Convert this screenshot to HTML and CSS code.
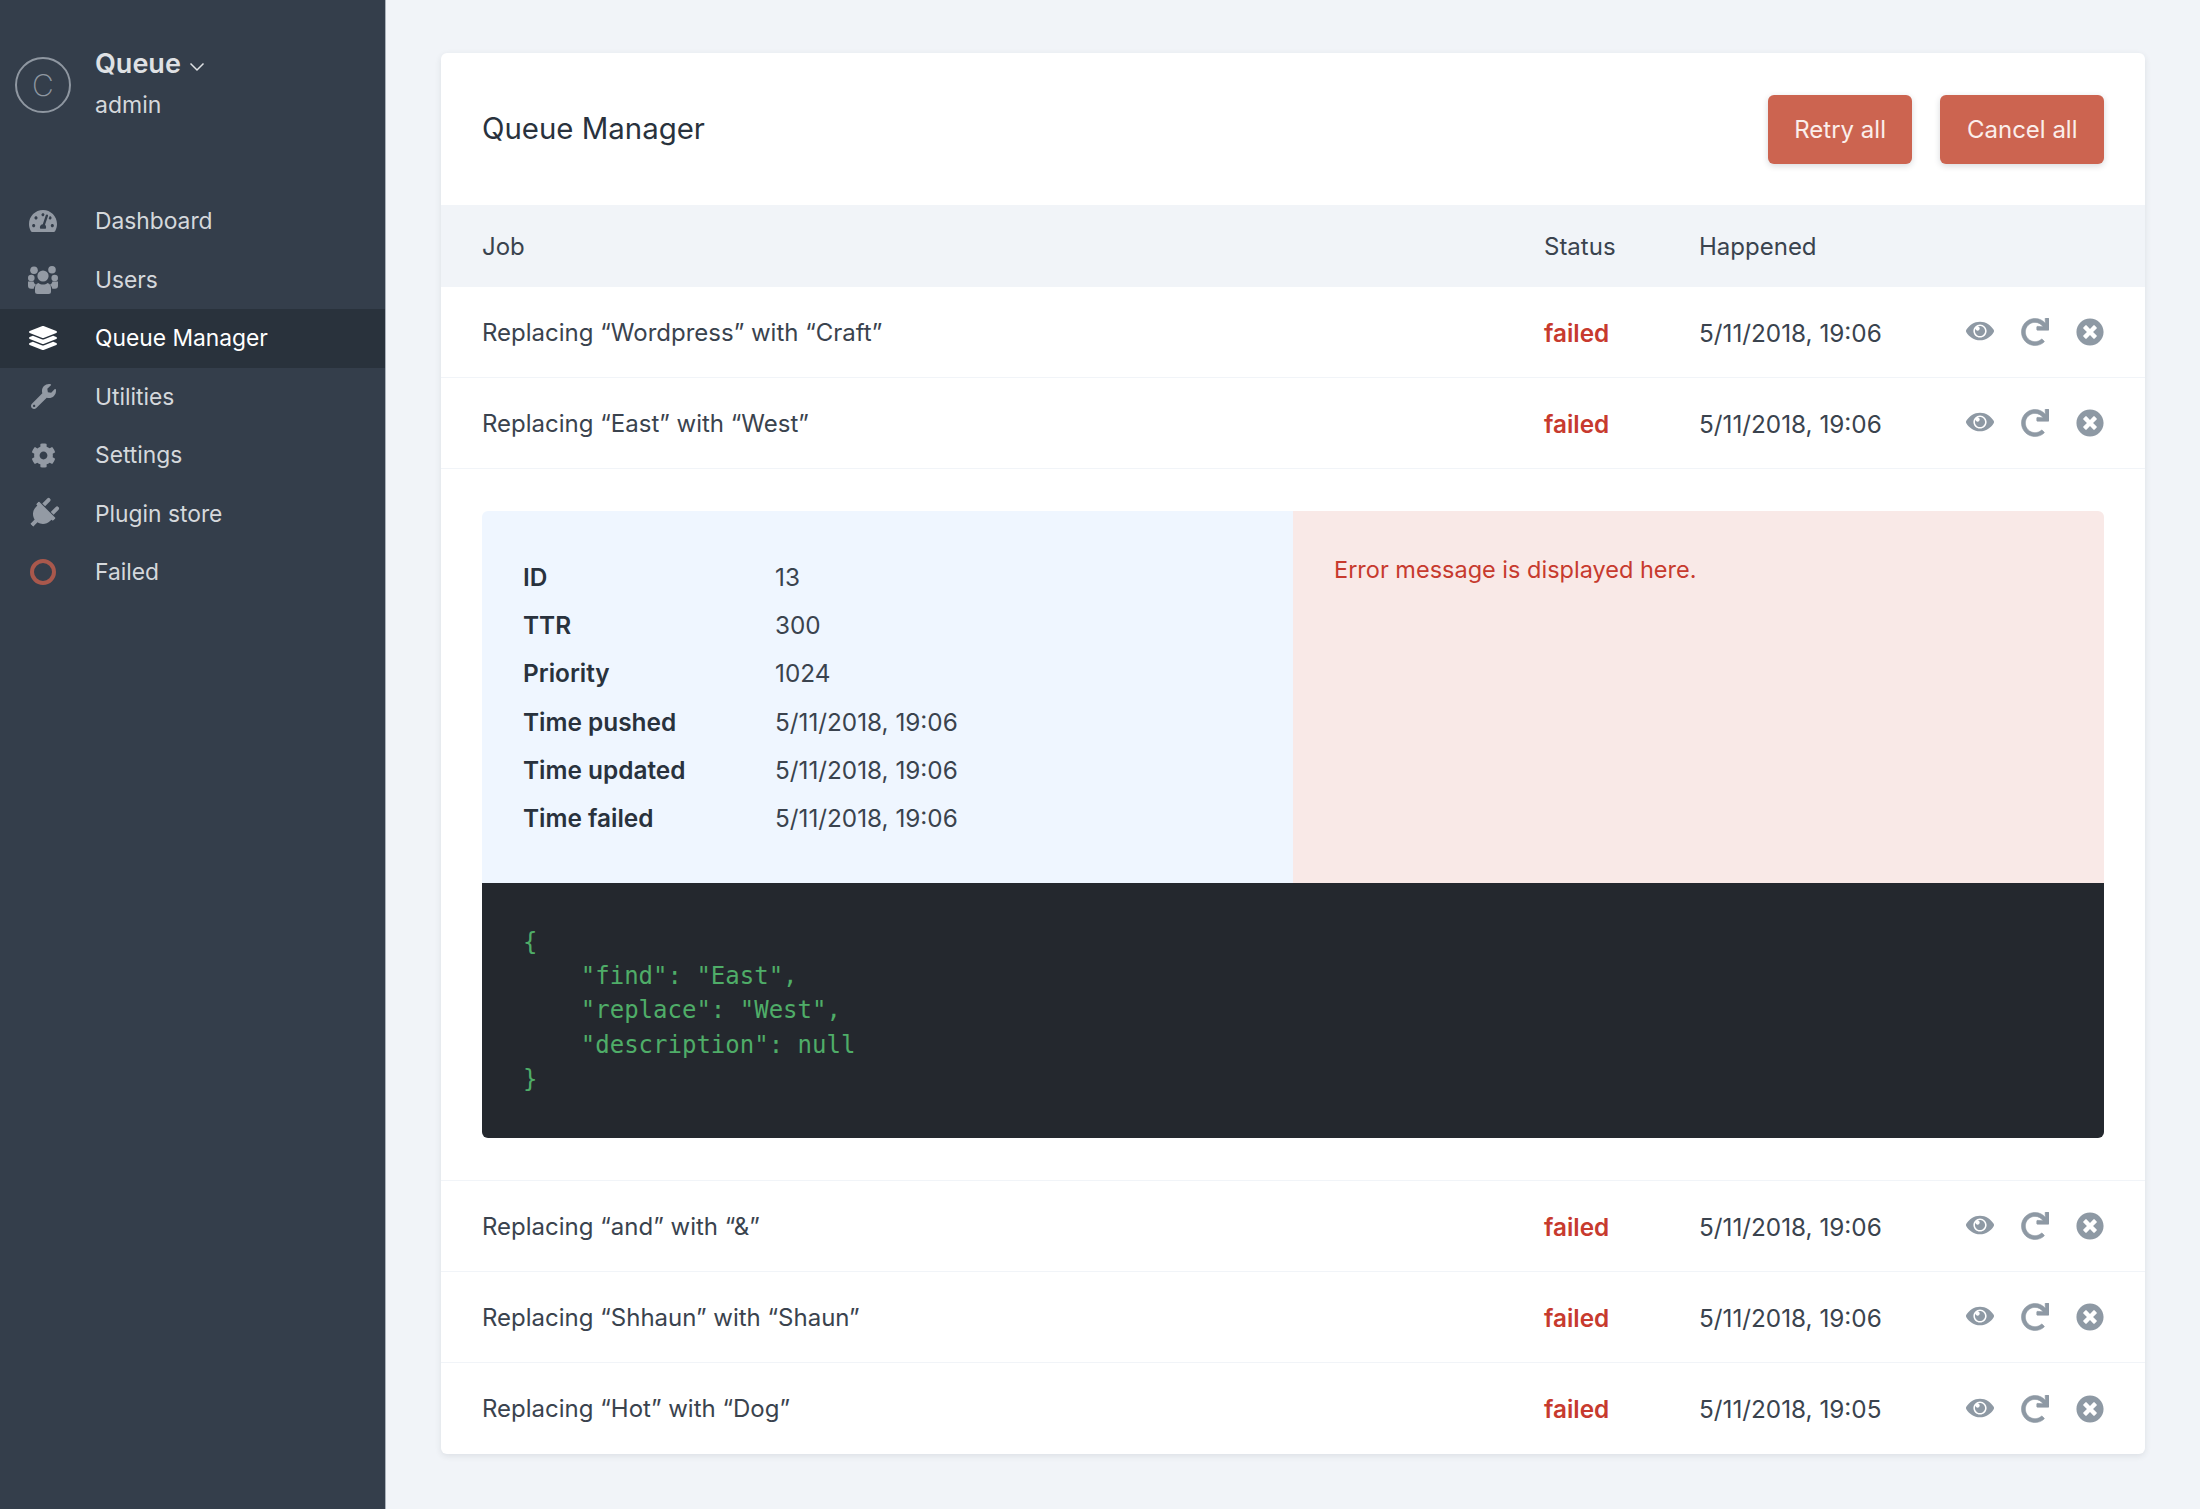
FILE: index.html
```html
<!DOCTYPE html>
<html lang="en">
<head>
<meta charset="utf-8">
<title>Queue Manager</title>
<link rel="stylesheet" href="styles.css">
</head>
<body>
<svg class="defs" width="0" height="0" aria-hidden="true">
  <symbol id="i-eye" viewBox="0 0 576 512"><path d="M569.354 231.631C512.969 135.949 407.81 64 288 64 168.14 64 63.004 135.994 6.646 231.631a47.999 47.999 0 0 0 0 48.739C63.031 376.051 168.19 448 288 448c119.86 0 224.996-71.994 281.354-167.631a47.997 47.997 0 0 0 0-48.738zM288 392c-75.162 0-136-60.827-136-136 0-75.162 60.826-136 136-136 75.162 0 136 60.826 136 136 0 75.162-60.826 136-136 136zm104-136c0 57.438-46.562 104-104 104s-104-46.562-104-104c0-17.708 4.431-34.379 12.236-48.973l-.001.032c0 23.651 19.173 42.823 42.824 42.823s42.824-19.173 42.824-42.823c0-23.651-19.173-42.824-42.824-42.824l-.032.001C253.621 156.431 270.292 152 288 152c57.438 0 104 46.562 104 104z"/></symbol>
  <symbol id="i-redo" viewBox="0 0 512 512"><path d="M500.333 0h-47.411c-6.853 0-12.314 5.729-11.986 12.574l3.966 82.759C399.416 41.899 331.672 8 256.001 8 119.34 8 7.899 119.526 8 256.187 8.101 393.068 119.096 504 256 504c63.926 0 122.202-24.187 166.178-63.908 5.113-4.618 5.354-12.561.482-17.433l-33.971-33.971c-4.466-4.466-11.64-4.717-16.38-.543C341.308 415.448 300.606 432 256 432c-97.267 0-176-78.716-176-176 0-97.267 78.716-176 176-176 60.892 0 114.506 30.858 146.099 77.8l-101.525-4.865c-6.845-.328-12.574 5.133-12.574 11.986v47.411c0 6.627 5.373 12 12 12h200.333c6.627 0 12-5.373 12-12V12c0-6.627-5.373-12-12-12z"/></symbol>
  <symbol id="i-times" viewBox="0 0 512 512"><path d="M256 8C119 8 8 119 8 256s111 248 248 248 248-111 248-248S393 8 256 8zm121.6 313.1c4.7 4.7 4.7 12.3 0 17L338 377.6c-4.7 4.7-12.3 4.7-17 0L256 312l-65.1 65.6c-4.7 4.7-12.3 4.7-17 0L134.4 338c-4.7-4.7-4.7-12.3 0-17l65.6-65-65.6-65.1c-4.7-4.7-4.7-12.3 0-17l39.6-39.6c4.7-4.7 12.3-4.7 17 0l65 65.7 65.1-65.6c4.7-4.7 12.3-4.7 17 0l39.6 39.6c4.7 4.7 4.7 12.3 0 17L312 256l65.6 65.1z"/></symbol>
</svg>
<div class="app">
  <aside class="sidebar">
    <header class="brand">
      <div class="logo">C</div>
      <div class="brand-text">
        <div class="brand-name">Queue
          <svg class="chev" viewBox="0 0 16 10"><path d="M1.5 1.5 8 8l6.5-6.5" fill="none" stroke="currentColor" stroke-width="1.5"/></svg>
        </div>
        <div class="brand-user">admin</div>
      </div>
    </header>
    <nav class="nav">
      <a class="nav-item"><span class="nav-icon"><svg viewBox="0 0 576 512"><path d="M288 32C128.94 32 0 160.94 0 320c0 52.8 14.25 102.26 39.06 144.8 5.61 9.62 16.3 15.2 27.44 15.2h443c11.14 0 21.83-5.58 27.44-15.2C561.75 422.26 576 372.8 576 320c0-159.06-128.94-288-288-288zm0 64c14.71 0 26.58 10.13 30.32 23.65-1.11 2.26-2.64 4.23-3.45 6.67l-9.22 27.67c-5.13 3.49-10.97 6.01-17.64 6.01-17.67 0-32-14.33-32-32S270.33 96 288 96zM96 384c-17.67 0-32-14.33-32-32s14.33-32 32-32 32 14.33 32 32-14.33 32-32 32zm48-160c-17.67 0-32-14.33-32-32s14.33-32 32-32 32 14.33 32 32-14.33 32-32 32zm246.77-72.41l-61.33 184C343.13 347.33 352 364.54 352 384c0 11.72-3.38 22.55-8.88 32H232.88c-5.5-9.45-8.88-20.28-8.88-32 0-33.94 26.5-61.43 59.9-63.59l61.34-184.01c4.17-12.56 17.73-19.45 30.36-15.17 12.57 4.19 19.35 17.79 15.17 30.36zm14.66 57.2l15.52-46.55c3.47-1.29 7.13-2.23 11.05-2.23 17.67 0 32 14.33 32 32s-14.33 32-32 32c-11.38-.01-20.89-6.27-26.57-15.22zM480 384c-17.67 0-32-14.33-32-32s14.33-32 32-32 32 14.33 32 32-14.33 32-32 32z"/></svg></span>Dashboard</a>
      <a class="nav-item"><span class="nav-icon"><svg class="users" viewBox="0 0 30 28"><circle cx="6" cy="4.3" r="3.8"/><circle cx="24" cy="3.8" r="3.8"/><circle cx="3.3" cy="12" r="3.3"/><circle cx="26.7" cy="12" r="3.3"/><circle cx="15" cy="10" r="5.6"/><path d="M0 15.5h5.5a5 5 0 0 0 2.5 3.2c-1.2 1-2 2.4-2.3 4H3a3 3 0 0 1-3-3zM30 15.5h-5.5a5 5 0 0 1-2.5 3.2c1.2 1 2 2.4 2.3 4H27a3 3 0 0 0 3-3zM10.5 17c1.2 1 2.8 1.6 4.5 1.6s3.300-.6 4.500-1.600c2.500.6 3.500 2.800 3.500 5.500v3a2.500 2.500 0 0 1-2.500 2.500H9.500A2.500 2.500 0 0 1 7 25.500v-3c0-2.700 1-4.900 3.500-5.500z"/></svg></span>Users</a>
      <a class="nav-item is-active"><span class="nav-icon"><svg class="layers" viewBox="0 0 512 512" preserveAspectRatio="none"><path d="M12.41 148.02l232.94 105.67c6.8 3.09 14.49 3.09 21.29 0l232.94-105.67c16.55-7.51 16.55-32.52 0-40.03L266.65 2.31a25.607 25.607 0 0 0-21.29 0L12.41 107.98c-16.55 7.51-16.55 32.53 0 40.04zm487.18 88.28l-58.09-26.33-161.64 73.27c-7.56 3.43-15.59 5.17-23.86 5.17s-16.29-1.74-23.86-5.17L70.51 209.97l-58.1 26.33c-16.55 7.5-16.55 32.5 0 40l232.94 105.59c6.8 3.08 14.49 3.08 21.29 0L499.59 276.3c16.55-7.5 16.55-32.5 0-40zm0 127.8l-57.87-26.23-161.86 73.37c-7.56 3.43-15.59 5.17-23.86 5.17s-16.29-1.74-23.86-5.17L70.29 337.87 12.41 364.1c-16.55 7.5-16.55 32.5 0 40l232.94 105.59c6.8 3.08 14.49 3.08 21.29 0L499.59 404.1c16.55-7.5 16.55-32.5 0-40z"/></svg></span>Queue Manager</a>
      <a class="nav-item"><span class="nav-icon"><svg class="small" viewBox="0 0 512 512"><path d="M507.73 109.1c-2.24-9.03-13.54-12.09-20.12-5.51l-74.36 74.36-67.88-11.31-11.31-67.88 74.36-74.36c6.62-6.62 3.43-17.9-5.66-20.16-47.38-11.74-99.55.91-136.58 37.93-39.64 39.64-50.55 97.1-34.05 147.2L18.74 402.76c-24.99 24.99-24.99 65.51 0 90.5 24.99 24.99 65.51 24.99 90.5 0l213.21-213.21c50.12 16.71 107.47 5.68 147.37-34.22 37.07-37.07 49.7-89.32 37.91-136.73zM64 472c-13.25 0-24-10.75-24-24 0-13.26 10.75-24 24-24s24 10.74 24 24c0 13.25-10.75 24-24 24z"/></svg></span>Utilities</a>
      <a class="nav-item"><span class="nav-icon"><svg class="small" viewBox="0 0 512 512"><path d="M487.4 315.7l-42.6-24.6c4.3-23.2 4.3-47 0-70.2l42.6-24.6c4.9-2.8 7.1-8.6 5.5-14-11.1-35.6-30-67.8-54.7-94.6-3.8-4.1-10-5.1-14.8-2.3L380.8 110c-17.9-15.4-38.5-27.3-60.8-35.1V25.8c0-5.6-3.9-10.5-9.4-11.7-36.7-8.2-74.3-7.8-109.2 0-5.5 1.2-9.4 6.1-9.4 11.7V75c-22.2 7.9-42.8 19.8-60.8 35.1L88.7 85.5c-4.9-2.8-11-1.9-14.8 2.3-24.7 26.7-43.6 58.9-54.7 94.6-1.7 5.4.6 11.2 5.5 14L67.3 221c-4.3 23.2-4.3 47 0 70.2l-42.6 24.6c-4.9 2.8-7.1 8.6-5.5 14 11.1 35.6 30 67.8 54.7 94.6 3.8 4.1 10 5.1 14.8 2.3l42.6-24.6c17.9 15.4 38.5 27.3 60.8 35.1v49.2c0 5.6 3.9 10.5 9.4 11.7 36.7 8.2 74.3 7.8 109.2 0 5.5-1.2 9.4-6.1 9.4-11.7v-49.2c22.2-7.9 42.8-19.8 60.8-35.1l42.6 24.6c4.9 2.8 11 1.9 14.8-2.3 24.7-26.7 43.6-58.9 54.7-94.6 1.5-5.5-.7-11.3-5.6-14.1zM256 336c-44.1 0-80-35.9-80-80s35.9-80 80-80 80 35.9 80 80-35.9 80-80 80z"/></svg></span>Settings</a>
      <a class="nav-item"><span class="nav-icon"><svg class="plug" viewBox="0 0 384 512"><path d="M256 144V32c0-17.673 14.327-32 32-32s32 14.327 32 32v112h-64zm112 16H16c-8.837 0-16 7.163-16 16v32c0 8.837 7.163 16 16 16h16v32c0 77.406 54.969 141.971 128 156.796V512h64v-99.204c73.031-14.825 128-79.39 128-156.796v-32h16c8.837 0 16-7.163 16-16v-32c0-8.837-7.163-16-16-16zM128 144V32c0-17.673-14.327-32-32-32S64 14.327 64 32v112h64z"/></svg></span>Plugin store</a>
      <a class="nav-item"><span class="nav-icon"><span class="ring"></span></span>Failed</a>
    </nav>
  </aside>

  <main class="main">
    <section class="card">
      <header class="card-head">
        <h1 class="title">Queue Manager</h1>
        <div class="actions-top">
          <button class="btn">Retry all</button>
          <button class="btn">Cancel all</button>
        </div>
      </header>

      <div class="row row-head">
        <div>Job</div><div>Status</div><div>Happened</div>
      </div>

      <div class="row">
        <div>Replacing “Wordpress” with “Craft”</div>
        <div class="failed">failed</div>
        <div class="date">5/11/2018, 19:06</div>
        <div class="row-icons">
          <svg class="ic ic-eye"><use href="#i-eye"/></svg><svg class="ic ic-redo"><use href="#i-redo"/></svg><svg class="ic"><use href="#i-times"/></svg>
        </div>
      </div>
      <div class="row">
        <div>Replacing “East” with “West”</div>
        <div class="failed">failed</div>
        <div class="date">5/11/2018, 19:06</div>
        <div class="row-icons">
          <svg class="ic ic-eye"><use href="#i-eye"/></svg><svg class="ic ic-redo"><use href="#i-redo"/></svg><svg class="ic"><use href="#i-times"/></svg>
        </div>
      </div>

      <div class="detail">
        <div class="detail-top">
          <dl class="info">
            <dt>ID</dt><dd>13</dd>
            <dt>TTR</dt><dd>300</dd>
            <dt>Priority</dt><dd>1024</dd>
            <dt>Time pushed</dt><dd>5/11/2018, 19:06</dd>
            <dt>Time updated</dt><dd>5/11/2018, 19:06</dd>
            <dt>Time failed</dt><dd>5/11/2018, 19:06</dd>
          </dl>
          <div class="error">Error message is displayed here.</div>
        </div>
        <pre class="code">{
    "find": "East",
    "replace": "West",
    "description": null
}</pre>
      </div>

      <div class="row">
        <div>Replacing “and” with “&amp;”</div>
        <div class="failed">failed</div>
        <div class="date">5/11/2018, 19:06</div>
        <div class="row-icons">
          <svg class="ic ic-eye"><use href="#i-eye"/></svg><svg class="ic ic-redo"><use href="#i-redo"/></svg><svg class="ic"><use href="#i-times"/></svg>
        </div>
      </div>
      <div class="row">
        <div>Replacing “Shhaun” with “Shaun”</div>
        <div class="failed">failed</div>
        <div class="date">5/11/2018, 19:06</div>
        <div class="row-icons">
          <svg class="ic ic-eye"><use href="#i-eye"/></svg><svg class="ic ic-redo"><use href="#i-redo"/></svg><svg class="ic"><use href="#i-times"/></svg>
        </div>
      </div>
      <div class="row row-last">
        <div>Replacing “Hot” with “Dog”</div>
        <div class="failed">failed</div>
        <div class="date">5/11/2018, 19:05</div>
        <div class="row-icons">
          <svg class="ic ic-eye"><use href="#i-eye"/></svg><svg class="ic ic-redo"><use href="#i-redo"/></svg><svg class="ic"><use href="#i-times"/></svg>
        </div>
      </div>
    </section>
  </main>
</div>
</body>
</html>
```
FILE: styles.css
```css
* { box-sizing: border-box; }
html, body { margin: 0; height: 100%; }
body {
  background: #f1f4f8;
  color: #3a434e;
  font-family: Inter, "Liberation Sans", sans-serif;
  font-size: 24px;
  line-height: 36px;
  overflow: hidden;
}
.defs { position: absolute; }
.app { display: flex; height: 1509px; }

.sidebar { width: 386px; flex: none; background: #343e4b; color: #d5d8dc; padding-top: 46px; border-right: 1px solid #aab1ba; }
.brand { display: flex; padding-left: 15px; gap: 24px; height: 146px; }
.logo { width: 56px; height: 56px; margin-top: 11px; border: 2px solid #8f97a1; border-radius: 50%; display: flex; align-items: center; justify-content: center; color: #8f97a1; font-size: 30px; font-weight: 200; }
.brand-name { font-size: 27px; font-weight: 600; line-height: 36px; color: #dfe1e4; display: flex; align-items: center; gap: 8px; }
.chev { width: 16px; height: 10px; margin-top: 5px; }
.brand-user { font-size: 23px; line-height: 36px; margin-top: 5px; }

.nav { display: flex; flex-direction: column; }
.nav-item { display: flex; align-items: center; height: 58.5px; padding-left: 29px; gap: 38px; color: #d5d8dc; font-size: 22.8px; }
.nav-icon { width: 28px; height: 28px; flex: none; display: flex; align-items: center; justify-content: center; }
.nav-icon svg { width: 28px; height: 28px; flex: none; fill: #939aa4; display: block; }
.nav-icon .small { width: 25px; height: 25px; }
.nav-icon .users { width: 30px; height: 28px; }
.nav-icon .layers { height: 24px; }
.nav-icon .plug { width: 24px; height: 32px; transform: rotate(45deg); }
.nav-item.is-active { background: #29323c; color: #fff; }
.nav-item.is-active svg { fill: #fff; }
.ring { width: 26px; height: 26px; border: 4px solid #a9584c; border-radius: 50%; }

.main { flex: 1; padding: 53px 55px 0 55px; }
.card { background: #fff; border-radius: 6px; box-shadow: 0 2px 6px rgba(41, 50, 61, .1); overflow: hidden; }
.card-head { height: 152px; padding: 0 41px; display: flex; align-items: center; justify-content: space-between; }
.title { margin: 0; font-size: 29.4px; font-weight: 400; color: #29323d; }
.actions-top { display: flex; gap: 28px; }
.btn { height: 69px; padding: 1px 26.5px 0; border: 0; border-radius: 6px; background: #cc6450; color: #fbeeeb; font: inherit; box-shadow: 0 2px 6px rgba(41, 50, 61, .18); }

.row { display: grid; grid-template-columns: 1062px 155px 1fr auto; align-items: center; height: 91px; padding: 1px 41px 0; border-bottom: 1px solid #f1f4f8; }
.row-head { height: 82px; background: #f1f4f8; border-bottom: 0; }
.row-last { border-bottom: 0; }
.failed { color: #c73a2e; font-weight: 600; font-size: 24.3px; }
.date { font-size: 24.3px; }
.row-icons { display: flex; align-items: center; gap: 27px; margin-top: -1px; }
.ic { width: 28px; height: 28px; fill: #8e99a4; display: block; overflow: visible; }
.ic-eye { margin-top: -2px; }
.ic-redo { stroke: #8e99a4; stroke-width: 10; }

.detail { padding: 42px 41px; border-bottom: 1px solid #f1f4f8; }
.detail-top { display: flex; }
.info { flex: 1; margin: 0; padding: 42px 41px 40px; height: 372px; background: #eff6ff; border-radius: 6px 0 0 0; display: grid; grid-template-columns: 252px 1fr; grid-auto-rows: 48.2px; align-items: center; }
.info dt { font-weight: 600; color: #29323d; font-size: 24.4px; }
.info dd { margin: 0; font-size: 24.3px; }
.error { flex: 1; padding: 41px; background: #f9e9e7; color: #c73a2e; border-radius: 0 6px 0 0; font-size: 23.5px; }
.code { margin: 0; padding: 41.5px 41px 0; height: 255px; background: #24282e; color: #4fad68; font-family: "DejaVu Sans Mono", monospace; font-size: 24px; line-height: 34.4px; border-radius: 0 0 6px 6px; }
```
